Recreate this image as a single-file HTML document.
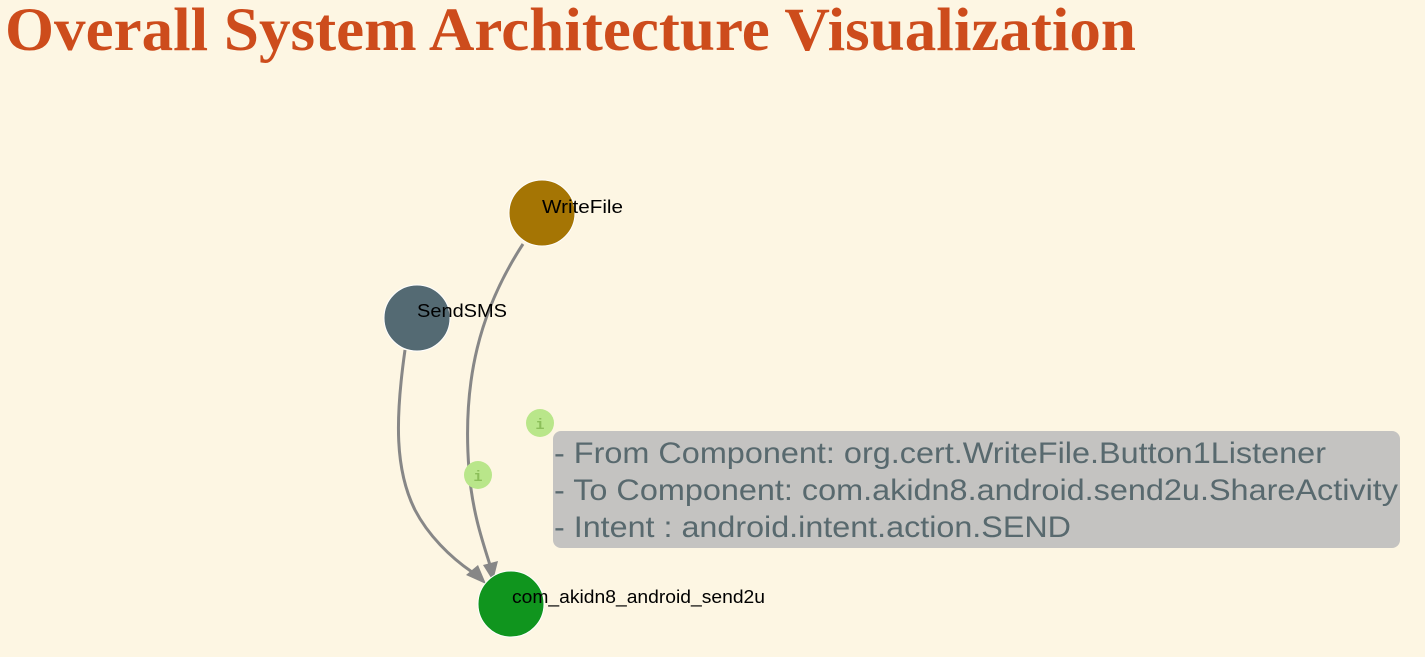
<!DOCTYPE html>
<html><head><meta charset="utf-8"><style>
html,body{margin:0;padding:0;background:#fdf6e3;width:1425px;height:657px;overflow:hidden}
svg{display:block}
</style></head><body>
<svg width="1425" height="657" xmlns="http://www.w3.org/2000/svg">
<rect width="1425" height="657" fill="#fdf6e3"/>
<text x="5" y="50" font-family="Liberation Serif, serif" font-weight="bold" font-size="61" fill="#cd4c1c" textLength="1131" lengthAdjust="spacingAndGlyphs">Overall System Architecture Visualization</text>
<g fill="none" stroke="#878787" stroke-width="3">
<path d="M523 244 C 480 310, 462 380, 469 470 C 472 510, 482 540, 490 565"/>
<path d="M405 350 C 395 420, 395 470, 415 510 C 428 535, 450 557, 472 572"/>
</g>
<polygon points="483,565 498,561 493,581" fill="#878787"/>
<polygon points="466,575 478,565 486,584" fill="#878787"/>
<circle cx="542" cy="213" r="33" fill="#a57504" stroke="#fff" stroke-width="1"/>
<circle cx="417" cy="318" r="33" fill="#546a73" stroke="#fff" stroke-width="1"/>
<circle cx="511" cy="604" r="33" fill="#10951e" stroke="#fff" stroke-width="1"/>
<g font-family="Liberation Sans, sans-serif" font-size="18" fill="#000">
<text x="542" y="213" textLength="81" lengthAdjust="spacingAndGlyphs">WriteFile</text>
<text x="417" y="317" textLength="90" lengthAdjust="spacingAndGlyphs">SendSMS</text>
<text x="512" y="603" textLength="253" lengthAdjust="spacingAndGlyphs">com_akidn8_android_send2u</text>
</g>
<circle cx="540" cy="423" r="14" fill="#b9e68a"/>
<circle cx="478" cy="475" r="14" fill="#b9e68a"/>
<g font-family="Liberation Mono, monospace" font-weight="bold" font-size="15" fill="#8cbf5a" text-anchor="middle">
<text x="540" y="429">i</text>
<text x="478" y="481">i</text>
</g>
<rect x="553" y="431" width="847" height="117" rx="8" fill="#c4c3c1"/>
<g font-family="Liberation Sans, sans-serif" font-size="30" fill="#58696e">
<text x="554" y="463" textLength="772" lengthAdjust="spacingAndGlyphs">- From Component: org.cert.WriteFile.Button1Listener</text>
<text x="554" y="500" textLength="844" lengthAdjust="spacingAndGlyphs">- To Component: com.akidn8.android.send2u.ShareActivity</text>
<text x="554" y="537" textLength="517" lengthAdjust="spacingAndGlyphs">- Intent : android.intent.action.SEND</text>
</g>
</svg>
</body></html>
